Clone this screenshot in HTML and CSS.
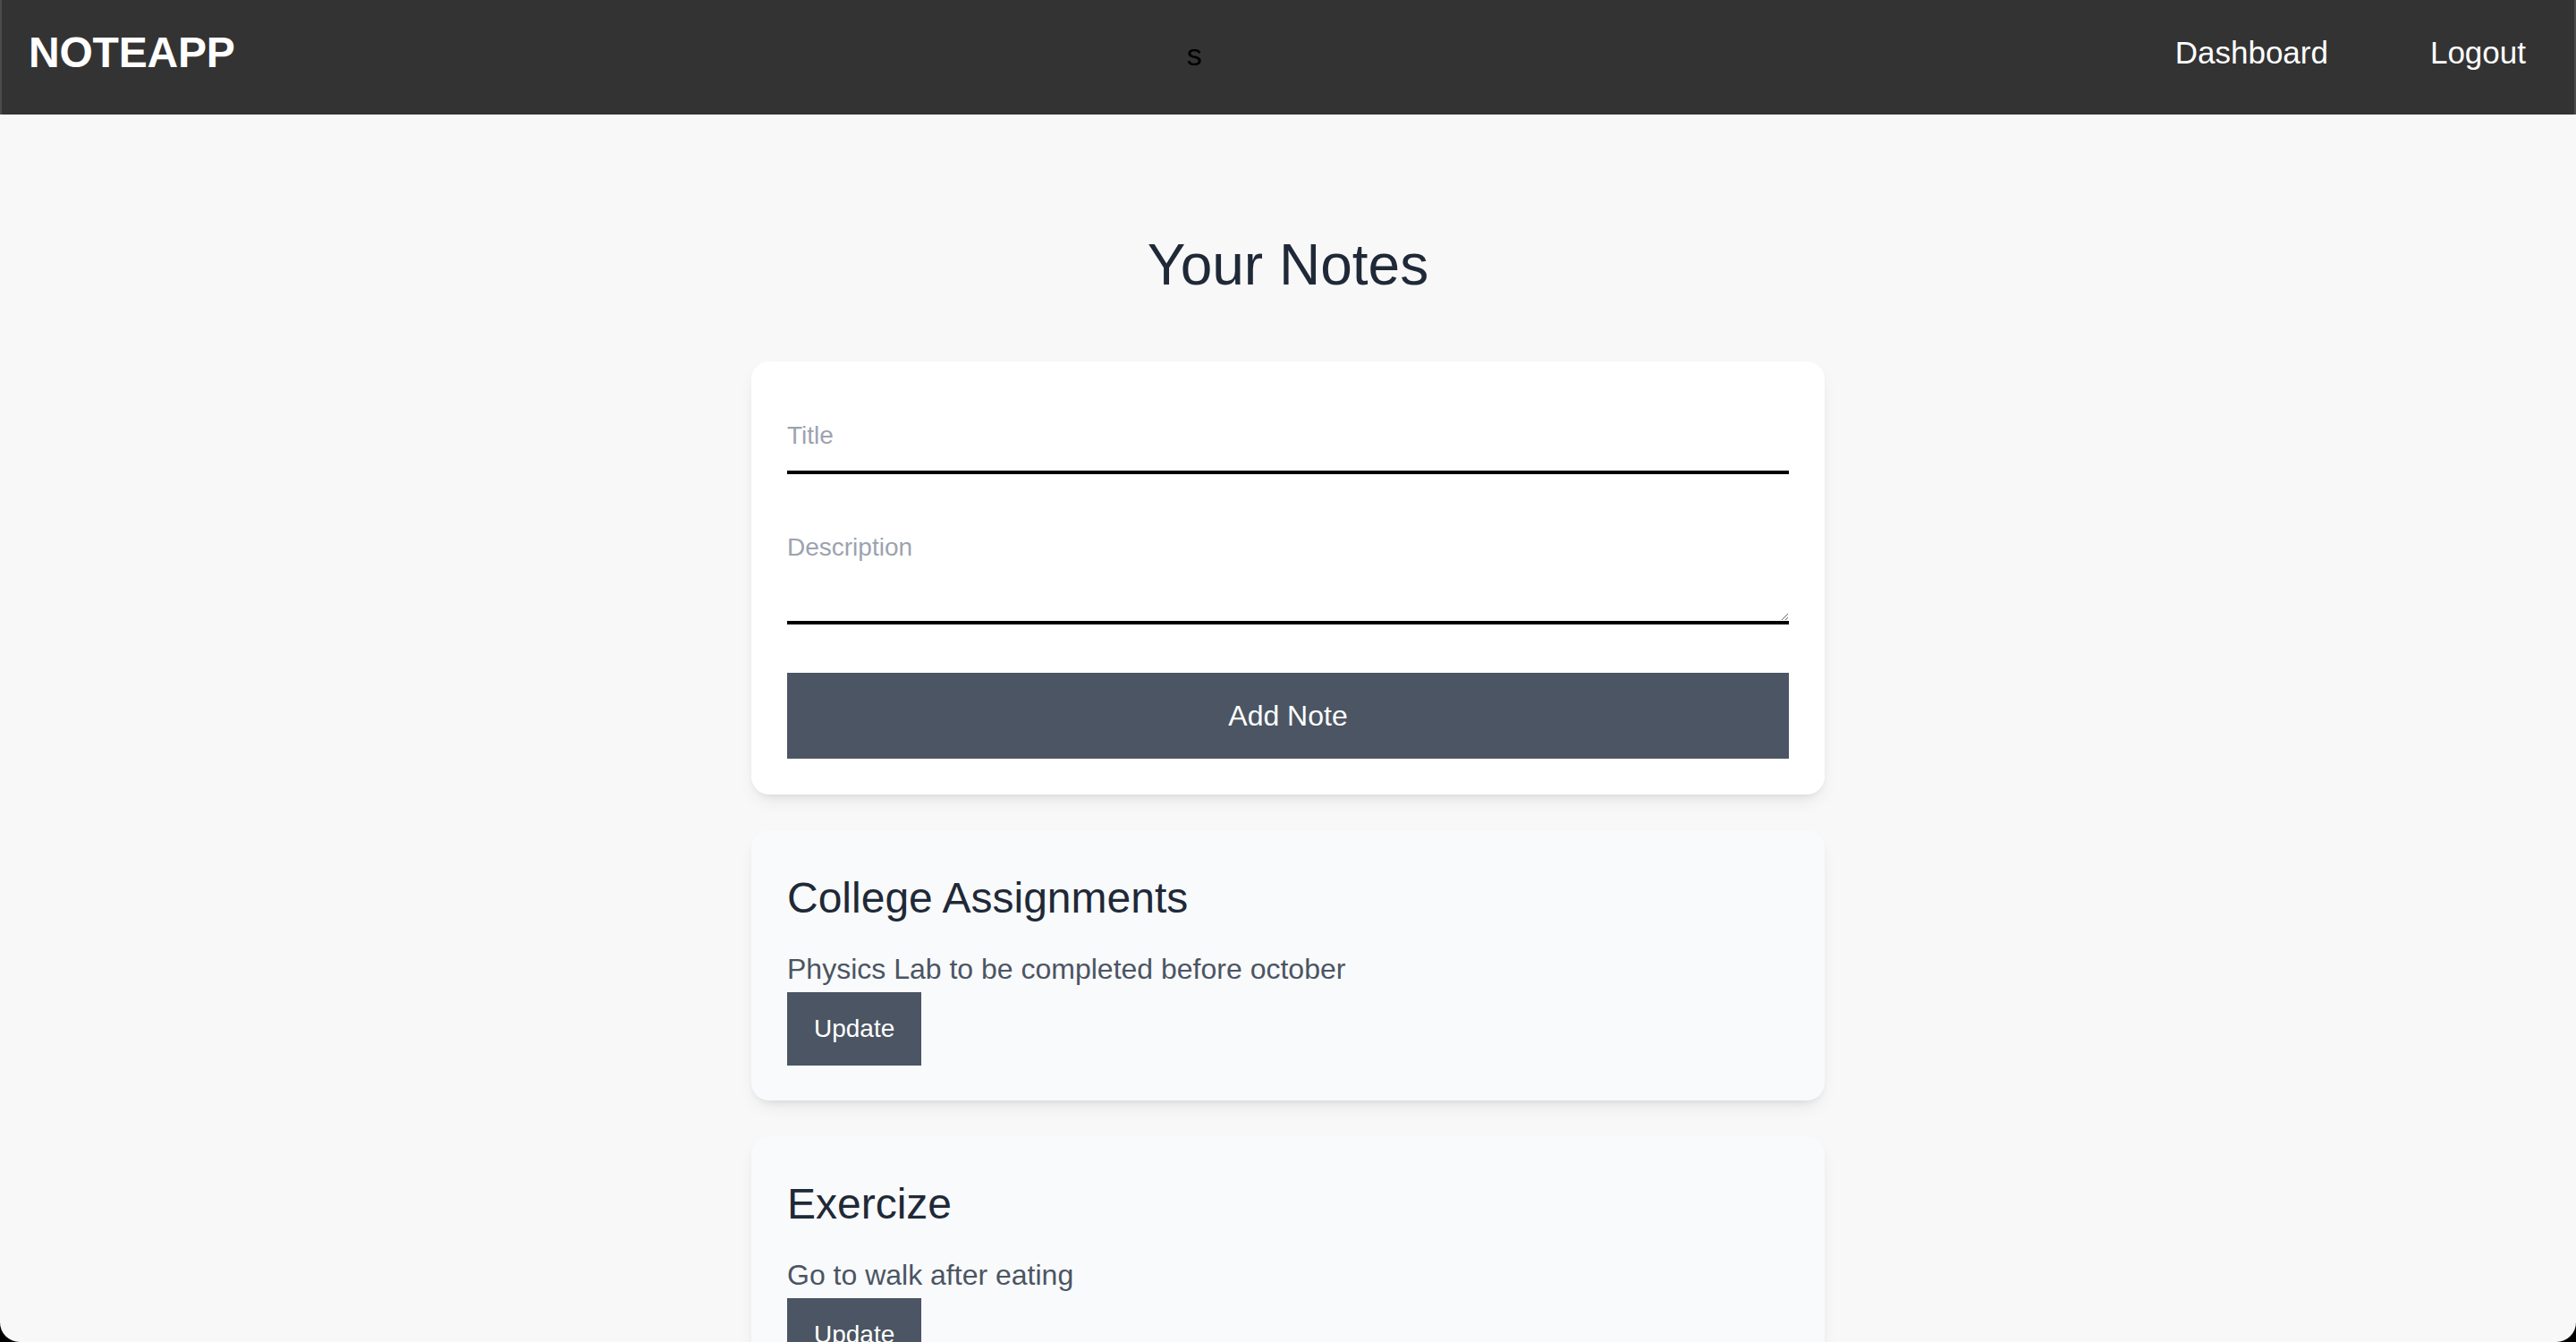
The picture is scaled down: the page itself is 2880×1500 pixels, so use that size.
FILE: index.html
```html
<!DOCTYPE html>
<html lang="en">
<head>
<meta charset="utf-8">
<title>NoteApp</title>
<link rel="stylesheet" href="styles.css">
</head>
<body>
<header class="topbar">
  <div class="brand">NOTEAPP</div>
  <div class="stray">s</div>
  <nav class="nav">
    <a class="nav-link" href="#">Dashboard</a>
    <a class="nav-link" href="#">Logout</a>
  </nav>
</header>
<main class="main">
  <h1 class="page-title">Your Notes</h1>
  <form class="card form-card">
    <input class="field field-title" type="text" placeholder="Title">
    <textarea class="field field-desc" placeholder="Description"></textarea>
    <button class="btn-add" type="button">Add Note</button>
  </form>
  <section class="card note-card">
    <h2 class="note-title">College Assignments</h2>
    <p class="note-desc">Physics Lab to be completed before october</p>
    <button class="btn-update" type="button">Update</button>
  </section>
  <section class="card note-card">
    <h2 class="note-title">Exercize</h2>
    <p class="note-desc">Go to walk after eating</p>
    <button class="btn-update" type="button">Update</button>
  </section>
</main>
<div class="window-frame"></div>
</body>
</html>
```
FILE: styles.css
```css
* { box-sizing: border-box; }
html { background: #f8f8f8; }
body {
  margin: 0;
  background: #f8f8f8;
  font-family: "Liberation Sans", Arial, Helvetica, sans-serif;
  color: #1f2937;
}
.topbar {
  height: 128px;
  background: #333333;
  display: flex;
  align-items: center;
  justify-content: space-between;
  padding: 0 32px 11px 32px;
}
.brand {
  color: #ffffff;
  font-weight: 700;
  font-size: 48px;
  line-height: 1;
  letter-spacing: -0.2px;
}
.stray {
  color: #000000;
  font-size: 34px;
  line-height: 1;
  padding-top: 4px;
}
.nav {
  display: flex;
  gap: 66px;
}
.nav-link {
  color: #ffffff;
  text-decoration: none;
  font-size: 35px;
  line-height: 1;
  padding: 0 24px;
}
.main {
  padding: 128px 0 80px;
  display: flex;
  flex-direction: column;
  align-items: center;
}
.page-title {
  margin: 0 0 68px;
  font-size: 64px;
  line-height: 80px;
  font-weight: 400;
  color: #1f2937;
}
.card {
  width: 1200px;
  border-radius: 20px;
  padding: 40px;
  box-shadow: 0 10px 20px -6px rgba(0,0,0,0.10), 0 4px 8px -4px rgba(0,0,0,0.08);
}
.form-card {
  background: #ffffff;
  display: flex;
  flex-direction: column;
  margin-bottom: 40px;
}
.field {
  width: 100%;
  border: 0;
  border-bottom: 4px solid #000000;
  background: transparent;
  font-family: inherit;
  font-size: 28px;
  color: #1f2937;
  padding: 0;
  outline: none;
}
.field::placeholder { color: #9ca3af; }
.field-title { height: 86px; padding-top: 4px; }
.field-desc {
  margin-top: 40px;
  height: 128px;
  padding-top: 22px;
  line-height: 40px;
  resize: vertical;
}
.btn-add {
  margin-top: 54px;
  height: 96px;
  border: 0;
  background: #4b5563;
  color: #ffffff;
  font-family: inherit;
  font-size: 32px;
}
.note-card {
  background: #f9fafb;
  margin-bottom: 40px;
  padding-bottom: 39px;
  display: flex;
  flex-direction: column;
  align-items: flex-start;
}
.note-title {
  margin: 0;
  font-size: 48px;
  line-height: 72px;
  font-weight: 400;
  color: #1f2937;
}
.note-desc {
  margin: 19px 0 2px;
  font-size: 32px;
  line-height: 48px;
  color: #4b5563;
}
.btn-update {
  height: 82px;
  padding: 0 30px;
  border: 0;
  background: #4b5563;
  color: #ffffff;
  font-family: inherit;
  font-size: 28px;
}
.window-frame {
  position: fixed;
  inset: 0;
  pointer-events: none;
  border-left: 2px solid rgba(255,255,255,0.12);
  border-right: 2px solid rgba(255,255,255,0.12);
  border-radius: 0 0 22px 22px;
  box-shadow: 0 0 0 60px #000000;
}
```
